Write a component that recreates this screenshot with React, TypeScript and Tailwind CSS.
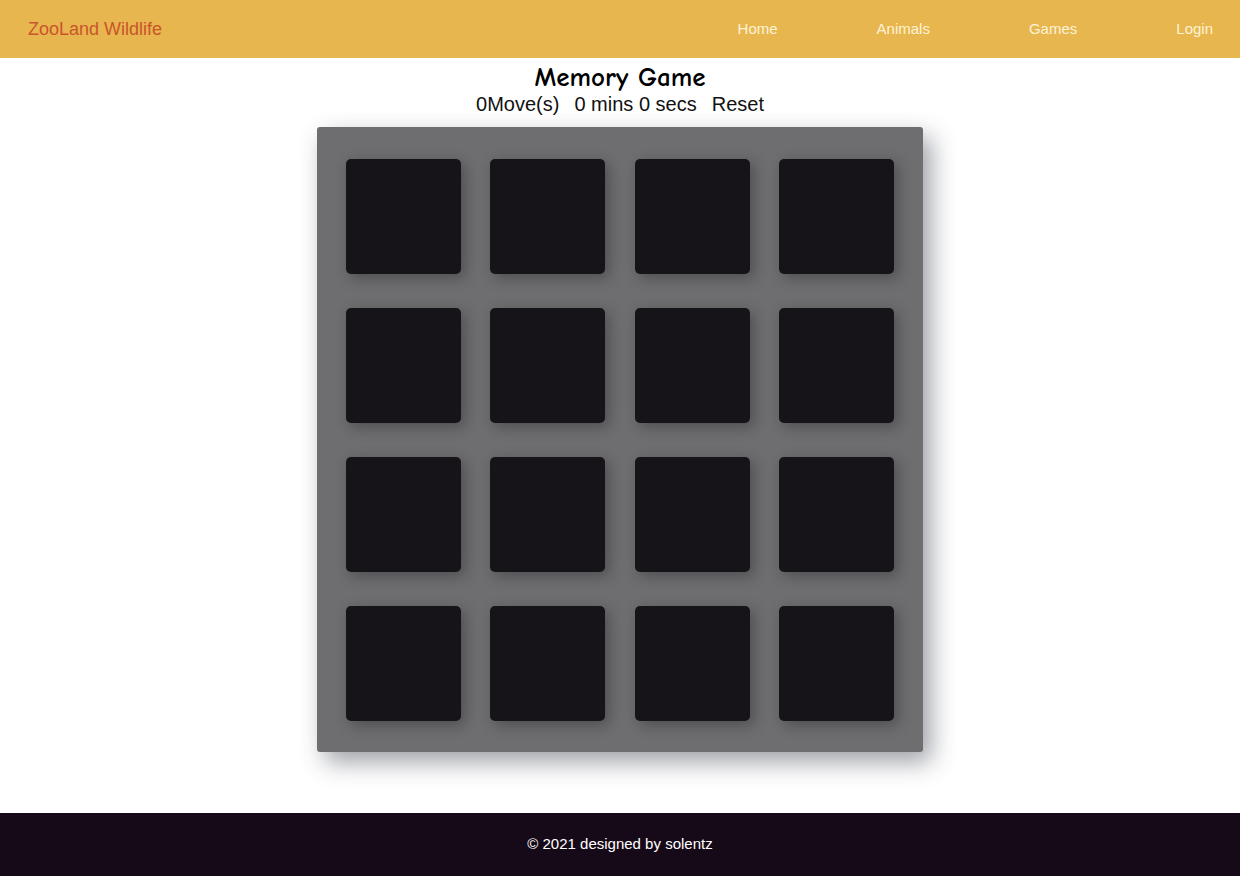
const cards = Array.from({ length: 16 }, (_, i) => i);

export default function App() {
  return (
    <div className="min-h-[876px] flex flex-col bg-white font-['Liberation_Sans',Arial,sans-serif]">
      <header className="h-[58px] bg-[#e8b64f] flex items-center justify-between pl-[28px] pr-[27px]">
        <span className="text-[18px] text-[#c8552b]">ZooLand Wildlife</span>
        <nav className="flex items-center gap-[99px] text-[15px] text-[#fdf3d6]">
          <a href="#">Home</a>
          <a href="#">Animals</a>
          <a href="#">Games</a>
          <a href="#">Login</a>
        </nav>
      </header>

      <main className="flex-1 flex flex-col items-center">
        <h1 className="mt-[6px] text-[27px] leading-[28px] font-bold text-black font-['Comic_Sans_MS','Comic_Neue',cursive]">
          Memory Game
        </h1>
        <div className="flex gap-[15px] text-[20px] leading-[24px] text-[#111]">
          <span>0Move(s)</span>
          <span>0 mins 0 secs</span>
          <span>Reset</span>
        </div>

        <div className="mt-[11px] w-[606px] h-[625px] bg-[#6e6d6f] rounded-[3px] shadow-[8px_10px_24px_rgba(40,45,60,0.45)] pl-[29px] pr-[29px] pt-[32px] pb-[31px] grid grid-cols-[repeat(4,115px)] justify-between content-between">
          {cards.map((c) => (
            <div
              key={c}
              className="w-[115px] h-[115px] rounded-[5px] bg-[#161418] shadow-[4px_4px_14px_rgba(20,20,30,0.35)]"
            />
          ))}
        </div>
      </main>

      <footer className="mt-[59px] h-[63px] bg-[#170a18] flex items-center justify-center text-[15px] text-white">
        © 2021 designed by solentz
      </footer>
    </div>
  );
}
